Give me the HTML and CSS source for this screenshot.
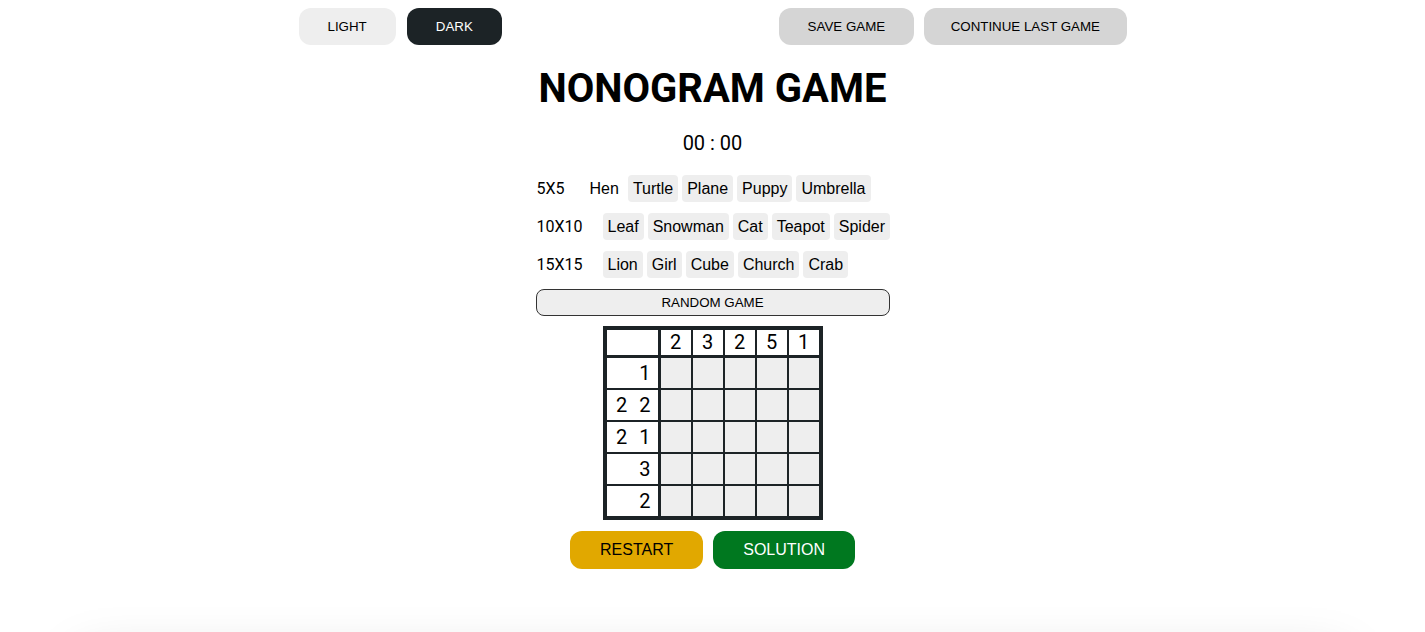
FILE: index.html
```html
<!DOCTYPE html>
<html>
<head>
<meta charset="utf-8">
<title>Nonogram Game</title>
<link rel="stylesheet" href="styles.css">
</head>
<body>
<div class="page">
  <header class="topbar">
    <div class="group group-left">
      <button class="btn btn-light">LIGHT</button>
      <button class="btn btn-dark">DARK</button>
    </div>
    <div class="group">
      <button class="btn btn-grey">SAVE GAME</button>
      <button class="btn btn-grey btn-wide">CONTINUE LAST GAME</button>
    </div>
  </header>

  <h1 class="title">NONOGRAM GAME</h1>
  <div class="timer">00 : 00</div>

  <div class="levels">
    <div class="level-row">
      <span class="level-label">5X5</span>
      <span class="pic pic-active">Hen</span>
      <span class="pic">Turtle</span>
      <span class="pic">Plane</span>
      <span class="pic">Puppy</span>
      <span class="pic">Umbrella</span>
    </div>
    <div class="level-row">
      <span class="level-label">10X10</span>
      <span class="pic">Leaf</span>
      <span class="pic">Snowman</span>
      <span class="pic">Cat</span>
      <span class="pic">Teapot</span>
      <span class="pic">Spider</span>
    </div>
    <div class="level-row">
      <span class="level-label">15X15</span>
      <span class="pic">Lion</span>
      <span class="pic">Girl</span>
      <span class="pic">Cube</span>
      <span class="pic">Church</span>
      <span class="pic">Crab</span>
    </div>
    <button class="random">RANDOM GAME</button>
  </div>

  <div class="board">
    <div class="corner"></div>
    <div class="col-clues">
      <div class="clue-top">2</div>
      <div class="clue-top">3</div>
      <div class="clue-top">2</div>
      <div class="clue-top">5</div>
      <div class="clue-top">1</div>
    </div>
    <div class="row-clues">
      <div class="clue-left"><span>1</span></div>
      <div class="clue-left"><span>2</span><span>2</span></div>
      <div class="clue-left"><span>2</span><span>1</span></div>
      <div class="clue-left"><span>3</span></div>
      <div class="clue-left"><span>2</span></div>
    </div>
    <div class="cells">
      <div class="cell"></div><div class="cell"></div><div class="cell"></div><div class="cell"></div><div class="cell"></div>
      <div class="cell"></div><div class="cell"></div><div class="cell"></div><div class="cell"></div><div class="cell"></div>
      <div class="cell"></div><div class="cell"></div><div class="cell"></div><div class="cell"></div><div class="cell"></div>
      <div class="cell"></div><div class="cell"></div><div class="cell"></div><div class="cell"></div><div class="cell"></div>
      <div class="cell"></div><div class="cell"></div><div class="cell"></div><div class="cell"></div><div class="cell"></div>
    </div>
  </div>

  <div class="actions">
    <button class="btn-action btn-restart">RESTART</button>
    <button class="btn-action btn-solution">SOLUTION</button>
  </div>

  <footer class="footer"></footer>
</div>
</body>
</html>
```

FILE: styles.css
```css
html, body {
  margin: 0;
  padding: 0;
  background: #ffffff;
  overflow: hidden;
}

body {
  font-family: "Liberation Sans", Arial, sans-serif;
  color: #000;
}

.page {
  display: flex;
  flex-direction: column;
  align-items: center;
  padding-top: 8px;
}

.topbar {
  width: 828px;
  display: flex;
  justify-content: space-between;
}

.group {
  display: flex;
  gap: 10px;
}

.group-left {
  gap: 11px;
}

.btn {
  height: 37px;
  padding: 0 29px;
  border: none;
  border-radius: 12px;
  font-family: "Liberation Sans", Arial, sans-serif;
  font-size: 13.333px;
  color: #000;
  cursor: pointer;
}

.btn-wide {
  padding: 0 26.5px;
}

.btn-light { background: #eeeeee; }
.btn-dark { background: #1c2326; color: #ffffff; }
.btn-grey { background: #d5d5d5; }

.title {
  margin: 20px 0 0;
  font-family: Roboto, "Liberation Sans", sans-serif;
  font-weight: 700;
  font-size: 40px;
  line-height: 47px;
}

.timer {
  margin-top: 19px;
  font-family: Roboto, "Liberation Sans", sans-serif;
  font-size: 20px;
  line-height: 24px;
}

.levels {
  width: 354px;
  margin-top: 20px;
  display: flex;
  flex-direction: column;
  gap: 11px;
}

.level-row {
  display: flex;
  align-items: center;
  gap: 4px;
  height: 27px;
}

.level-label {
  font-family: Roboto, "Liberation Sans", sans-serif;
  font-size: 16px;
  margin-right: 16px;
  padding-left: 1px;
}

.pic {
  background: #eeeeee;
  border-radius: 4px;
  padding: 4px 5px;
  font-size: 16px;
  line-height: 19px;
}

.pic-active {
  background: transparent;
}

.random {
  height: 27px;
  width: 354px;
  background: #eeeeee;
  border: 1px solid #333333;
  border-radius: 8px;
  font-family: "Liberation Sans", Arial, sans-serif;
  font-size: 13.333px;
  color: #000;
  padding: 0;
}

.board {
  margin-top: 10px;
  display: grid;
  grid-template-columns: 51px auto;
  grid-template-rows: 25px auto;
  gap: 3px;
  background: #1c2326;
  border: 4px solid #1c2326;
}

.corner { background: #ffffff; }

.col-clues {
  display: grid;
  grid-template-columns: repeat(5, 30px);
  gap: 2px;
}

.clue-top {
  background: #ffffff;
  font-family: Roboto, "Liberation Sans", sans-serif;
  font-size: 20px;
  line-height: 25px;
  text-align: center;
}

.row-clues {
  display: grid;
  grid-template-rows: repeat(5, 30px);
  gap: 2px;
}

.clue-left {
  background: #ffffff;
  display: flex;
  justify-content: flex-end;
  align-items: center;
  gap: 12px;
  padding-right: 7px;
  font-family: Roboto, "Liberation Sans", sans-serif;
  font-size: 20px;
}

.cells {
  display: grid;
  grid-template-columns: repeat(5, 30px);
  grid-template-rows: repeat(5, 30px);
  gap: 2px;
}

.cell { background: #eeeeee; }

.actions {
  margin-top: 11px;
  display: flex;
  gap: 10px;
}

.btn-action {
  height: 38px;
  border: none;
  border-radius: 12px;
  font-family: "Liberation Sans", Arial, sans-serif;
  font-size: 16px;
  padding: 0 30px;
}

.btn-restart { background: #e1a800; color: #000; }
.btn-solution { background: #00781f; color: #ffffff; }

.footer {
  margin-top: 90px;
  width: 1265px;
  height: 200px;
  background: #ffffff;
  box-shadow: 0 0 50px rgba(0, 0, 0, 0.18);
}
```
